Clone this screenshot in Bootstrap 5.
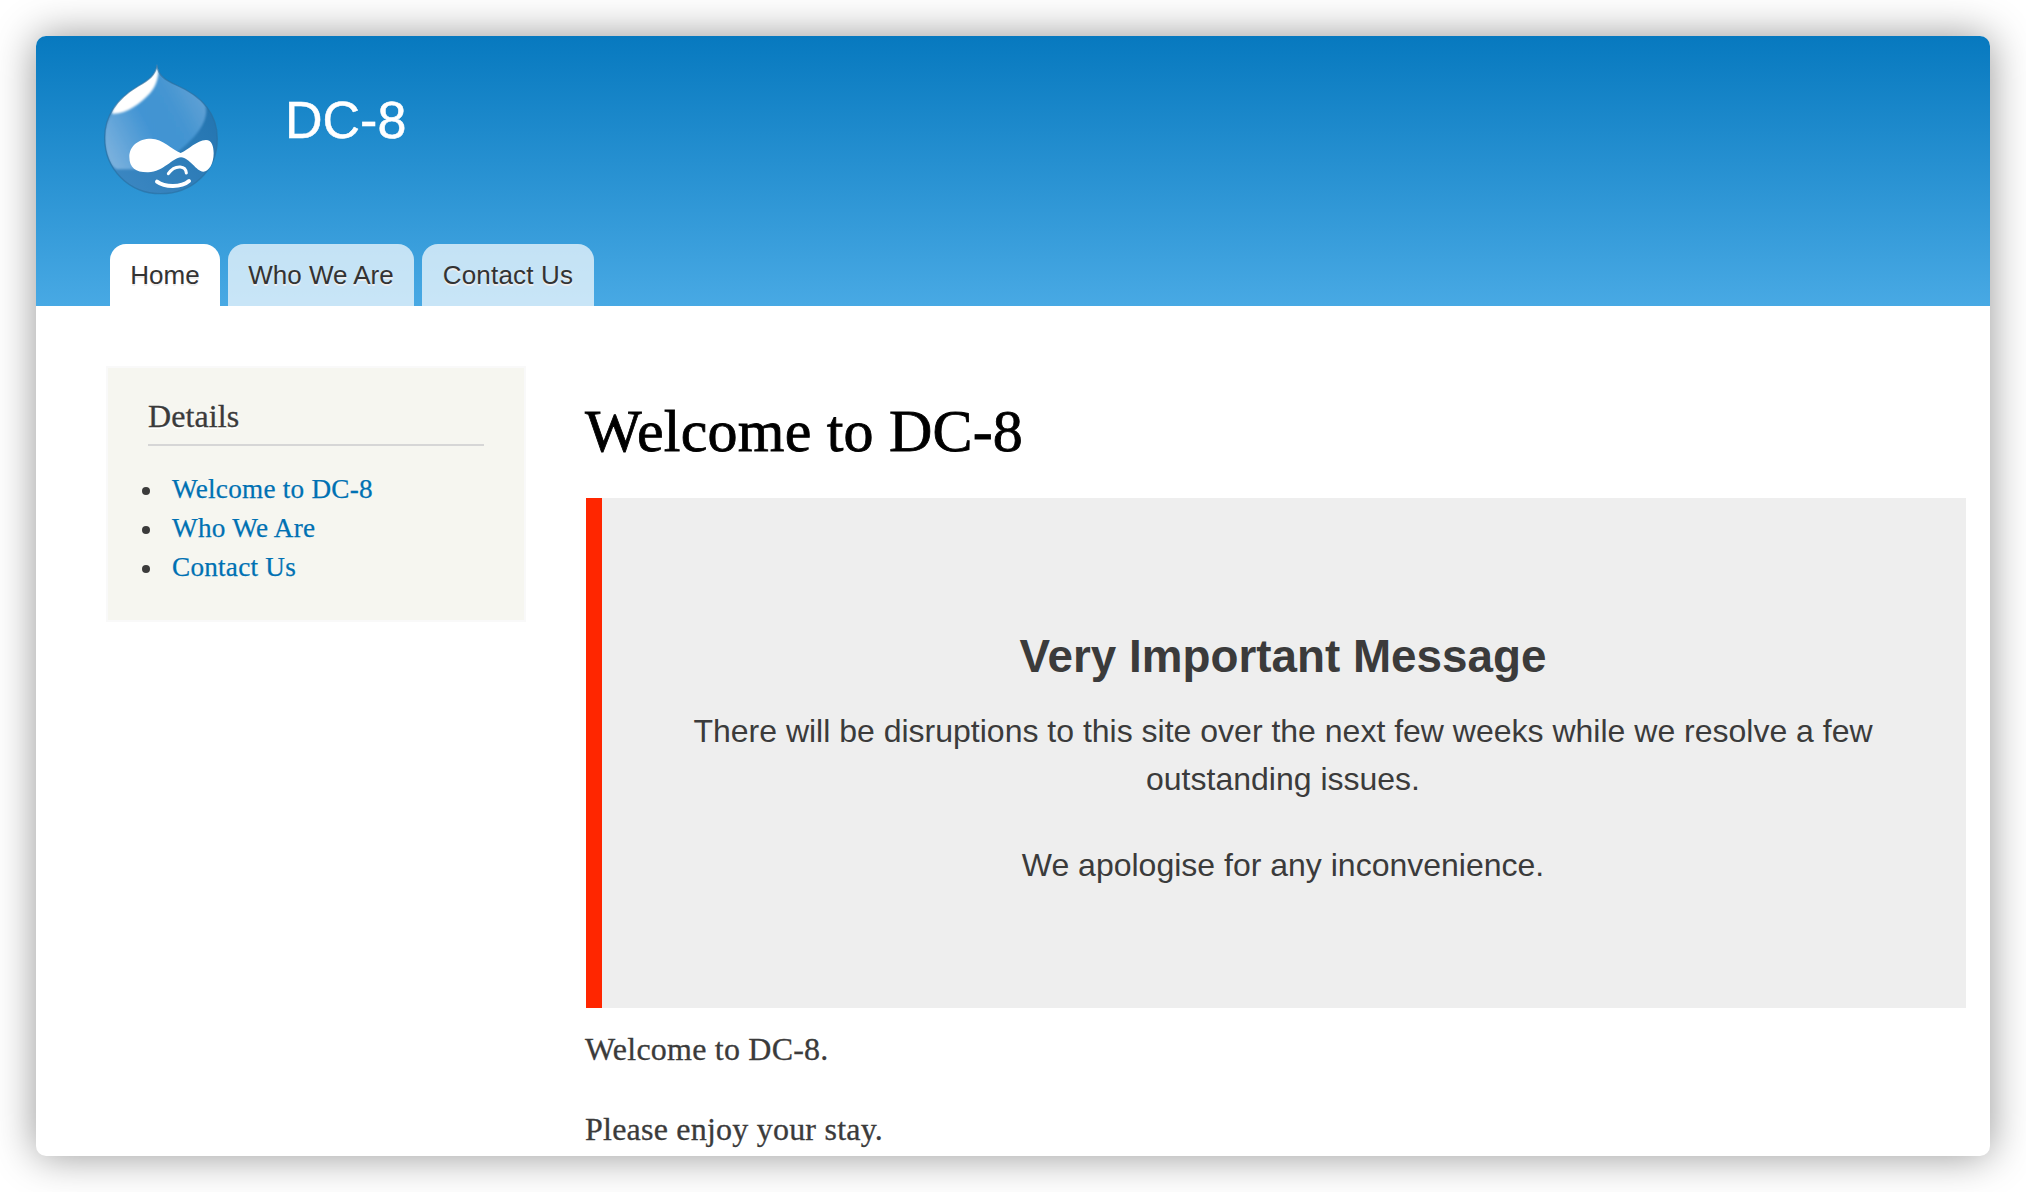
<!DOCTYPE html>
<html lang="en">
<head>
<meta charset="utf-8">
<title>Welcome to DC-8 | DC-8</title>
<link href="https://cdn.jsdelivr.net/npm/bootstrap@5.3.0/dist/css/bootstrap.min.css" rel="stylesheet">
<style>
body{padding:36px;height:1192px;overflow:hidden;font-family:"Liberation Serif",serif;color:#3b3b3b;font-size:32px;background:#fff}
.window{height:1120px;border-radius:10px;box-shadow:0 0 42px rgba(0,0,0,.42)}
.site-header{height:270px;padding:27px 0 0 66px;background:linear-gradient(#0779bf,#48a9e4)}
.site-logo{width:118px;height:132px}
.site-name{margin:27px 0 0 65px;font:400 52px/60px "Liberation Sans",Arial,sans-serif;letter-spacing:0;-webkit-text-stroke:.5px}
.main-tabs{margin-left:8px;gap:8px}
.main-tabs .nav-link{height:62px;padding:0;border-radius:16px 16px 0 0;font:400 26px/62px "Liberation Sans",Arial,sans-serif;color:#333;background:rgba(255,255,255,.7);text-shadow:0 2px #eee;white-space:nowrap;text-align:center}
.main-tabs .nav-link.active{background:#fff}
.tab-home{width:110px}.tab-who{width:186px}.tab-contact{width:172px;letter-spacing:.2px}
.main-area{padding:60px 24px 0 70px;gap:60px}
.side-box{width:420px;height:256px;background:#f6f6f0;border:2px solid #f9f9f9;padding:24px 40px}
.side-box h2{font-size:32px;line-height:48px;height:54px;margin:0;border-bottom:2px solid #d6d6d6;text-shadow:0 2px #fff;letter-spacing:.1px;-webkit-text-stroke:.3px}
.side-box ul{margin:24px 0 0 -6px;font-size:27.2px;line-height:39px;letter-spacing:.25px;-webkit-text-stroke:.25px}
.side-box li{gap:22px}
.side-box li::before{content:"";width:8px;height:8px;margin-top:2px;border-radius:50%;background:#3b3b3b}
.side-box a{color:#0071b3}
.page-title{font-size:60px;line-height:72px;margin:29px 0 31px -1px;color:#000;letter-spacing:.2px;-webkit-text-stroke:.8px}
.notice{height:510px;background:#eee;border-left:16px solid #ff2600;font-family:"Liberation Sans",Arial,sans-serif;padding:129px 82px 0 80px}
.notice h2{font-weight:700;font-size:45.8px;line-height:60px;margin:0 0 20px}
.notice p{font-size:32px;line-height:48px;margin:0 0 38px}
.copy{font-size:32px;line-height:48px;letter-spacing:.22px;-webkit-text-stroke:.3px;padding-top:17px;margin-left:-1px}
.copy p{margin:0 0 32px}
</style>
</head>
<body>
<div class="window overflow-hidden bg-white">
  <header class="site-header d-flex flex-column justify-content-between">
    <div class="d-flex align-items-start">
      <svg class="site-logo" viewBox="36 39 354 396" aria-label="Home">
        <defs>
          <linearGradient id="drop" x1="0" y1=".8" x2="1" y2=".2"><stop offset="0" stop-color="#79b0dd"/><stop offset=".4" stop-color="#4294d3"/><stop offset=".65" stop-color="#4495d2"/><stop offset="1" stop-color="#6ba5d5"/></linearGradient>
          <linearGradient id="shade" x1="0" y1="1" x2="1" y2="0"><stop offset="0" stop-color="#3f8ac5"/><stop offset="1" stop-color="#1c6fab"/></linearGradient>
          <clipPath id="dropClip"><path d="M201 42C204 74 224 90 258 105C330 136 382 184 382 266C382 364 304 431 212 431C117 431 44 357 44 263C44 189 88 142 145 108C177 89 195 77 201 42Z"/></clipPath>
          <filter id="soft"><feGaussianBlur stdDeviation="3"/></filter>
        </defs>
        <g clip-path="url(#dropClip)">
          <rect x="36" y="39" width="354" height="396" fill="url(#shade)"/>
          <path d="M201 20C205 90 325 115 345 160C362 212 315 264 270 300L200 358H80C55 345 44 300 44 263C44 150 170 110 201 20Z" fill="url(#drop)" filter="url(#soft)"/>
          <path d="M205 44C207 75 202 104 180 130C151 162 108 193 66 191C66 178 90 130 140 104C175 86 194 77 203 44Z" fill="#fff" filter="url(#soft)"/>
        </g>
        <path d="M201 46C204 76 224 90 258 105C330 136 382 184 382 266C382 364 304 431 212 431C117 431 44 357 44 263C44 189 88 142 145 108C177 89 195 77 201 46Z" fill="none" stroke="#2a6f9f" stroke-opacity=".65" stroke-width="4"/>
        <path d="M183 266C218 266 247 300 272 309C297 299 319 271 348 270C365 270 371 289 371 310C371 342 356 365 340 365C319 365 299 323 273 322C248 323 220 366 175 367C139 368 118 354 118 321C118 288 145 266 183 266Z" fill="#fff"/>
        <g fill="none" stroke="#fff" stroke-linecap="round"><path d="M235 371C246 355 258 350 271 351C284 352 288 359 289 369" stroke-width="9"/><path d="M201 395C224 412 274 413 297 393" stroke-width="12"/></g>
      </svg>
      <h1 class="site-name text-white">DC-8</h1>
    </div>
    <nav class="main-tabs nav">
      <a class="nav-link active tab-home" href="#">Home</a>
      <a class="nav-link tab-who" href="#">Who We Are</a>
      <a class="nav-link tab-contact" href="#">Contact Us</a>
    </nav>
  </header>
  <div class="main-area d-flex align-items-start">
    <aside class="side-box flex-shrink-0">
      <h2 class="fw-normal">Details</h2>
      <ul class="list-unstyled">
        <li class="d-flex align-items-center"><a class="text-decoration-none" href="#">Welcome to DC-8</a></li>
        <li class="d-flex align-items-center"><a class="text-decoration-none" href="#">Who We Are</a></li>
        <li class="d-flex align-items-center"><a class="text-decoration-none" href="#">Contact Us</a></li>
      </ul>
    </aside>
    <main class="flex-grow-1">
      <h1 class="page-title fw-normal">Welcome to DC-8</h1>
      <section class="notice text-center">
        <h2>Very Important Message</h2>
        <p>There will be disruptions to this site over the next few weeks while we resolve a few outstanding issues.</p>
        <p>We apologise for any inconvenience.</p>
      </section>
      <div class="copy">
        <p>Welcome to DC-8.</p>
        <p>Please enjoy your stay.</p>
      </div>
    </main>
  </div>
</div>
<script src="https://cdn.jsdelivr.net/npm/bootstrap@5.3.0/dist/js/bootstrap.bundle.min.js"></script>
</body>
</html>
